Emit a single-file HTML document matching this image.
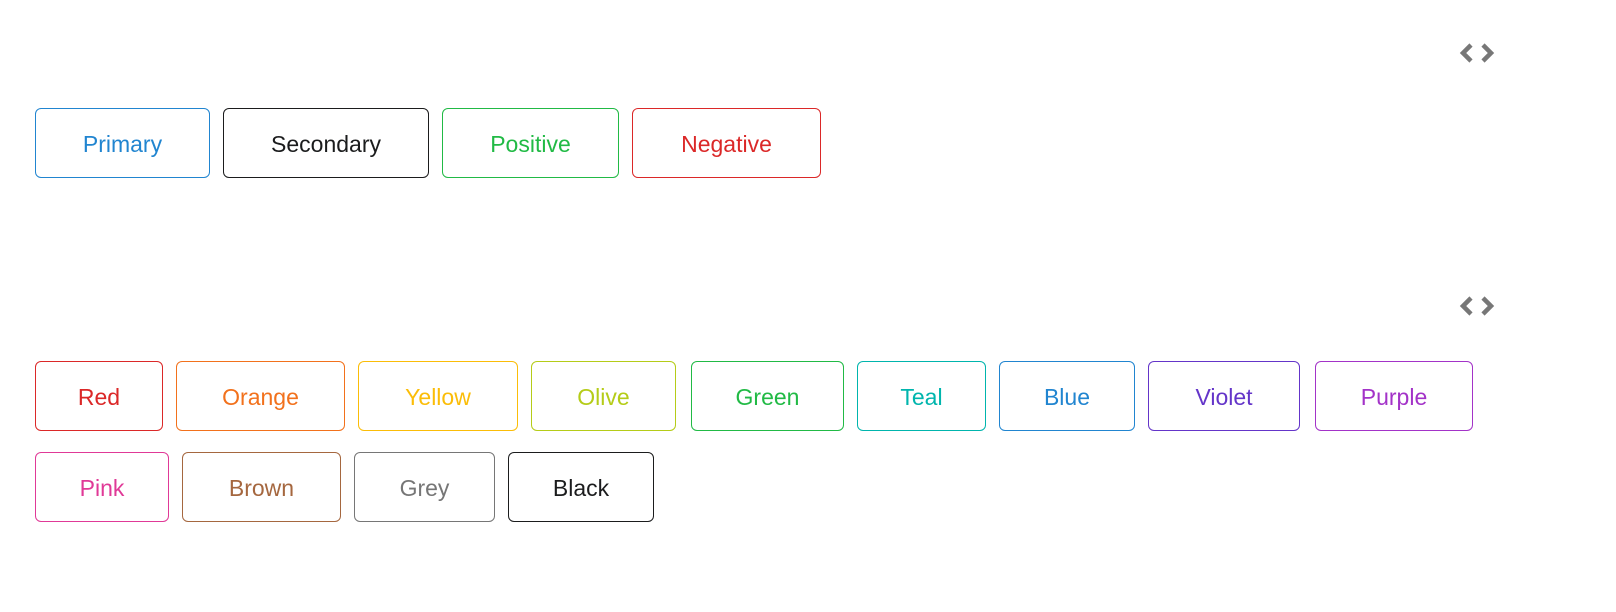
<html><head><style>
body{margin:0;width:1616px;height:612px;background:#fff;font-family:"Liberation Sans",sans-serif;position:relative;overflow:hidden}
.b{position:absolute;box-sizing:border-box;border:1.5px solid;border-radius:6px;display:flex;align-items:center;justify-content:center;font-size:23px;height:70px;padding-top:2px}
.i{position:absolute}
</style></head><body>
<svg class="i" style="left:1459px;top:42px" width="36" height="22" viewBox="0 0 36 22"><path d="M12 3 L4 11 L12 19" fill="none" stroke="#777" stroke-width="4.5"/><path d="M24 3 L32 11 L24 19" fill="none" stroke="#777" stroke-width="4.5"/></svg>
<svg class="i" style="left:1459px;top:295px" width="36" height="22" viewBox="0 0 36 22"><path d="M12 3 L4 11 L12 19" fill="none" stroke="#777" stroke-width="4.5"/><path d="M24 3 L32 11 L24 19" fill="none" stroke="#777" stroke-width="4.5"/></svg>
<div class="b" style="left:35px;top:108px;width:175px;color:#2185d0">Primary</div>
<div class="b" style="left:223px;top:108px;width:206px;color:#1b1c1d">Secondary</div>
<div class="b" style="left:442px;top:108px;width:177px;color:#21ba45">Positive</div>
<div class="b" style="left:632px;top:108px;width:189px;color:#db2828">Negative</div>

<div class="b" style="left:35px;top:361px;width:128px;color:#db2828">Red</div>
<div class="b" style="left:176px;top:361px;width:169px;color:#f2711c">Orange</div>
<div class="b" style="left:358px;top:361px;width:160px;color:#fbbd08">Yellow</div>
<div class="b" style="left:531px;top:361px;width:145px;color:#b5cc18">Olive</div>
<div class="b" style="left:691px;top:361px;width:153px;color:#21ba45">Green</div>
<div class="b" style="left:857px;top:361px;width:129px;color:#00b5ad">Teal</div>
<div class="b" style="left:999px;top:361px;width:136px;color:#2185d0">Blue</div>
<div class="b" style="left:1148px;top:361px;width:152px;color:#6435c9">Violet</div>
<div class="b" style="left:1315px;top:361px;width:158px;color:#a333c8">Purple</div>

<div class="b" style="left:35px;top:452px;width:134px;color:#e03997">Pink</div>
<div class="b" style="left:182px;top:452px;width:159px;color:#a5673f">Brown</div>
<div class="b" style="left:354px;top:452px;width:141px;color:#767676">Grey</div>
<div class="b" style="left:508px;top:452px;width:146px;color:#1b1c1d">Black</div>
</body></html>
